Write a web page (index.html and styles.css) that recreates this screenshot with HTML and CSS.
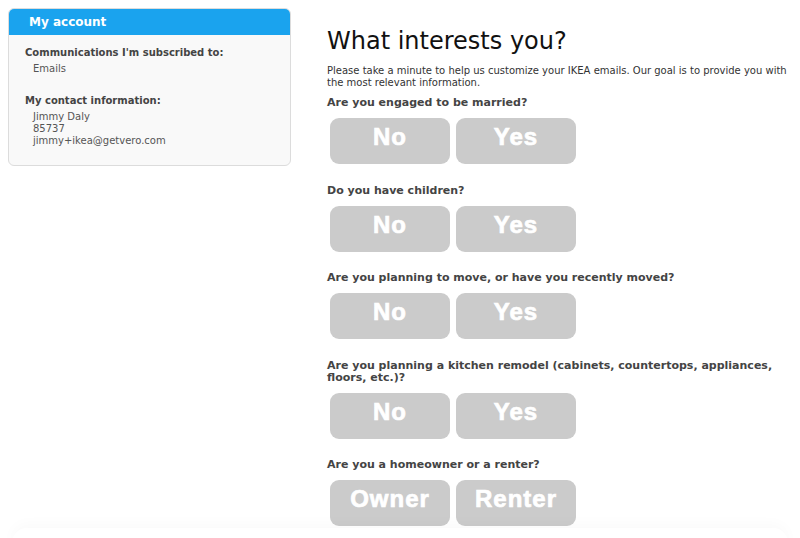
FILE: index.html
```html
<!DOCTYPE html>
<html lang="en">
<head>
    <meta charset="UTF-8">
    <title>My account</title>
    <link rel="stylesheet" href="styles.css">
</head>
<body>
    <div class="page">
        <div class="account-box">
            <div class="account-head">My account</div>
            <div class="account-body">
                <p class="label">Communications I'm subscribed to:</p>
                <p class="value">Emails</p>
                <p class="label spaced">My contact information:</p>
                <p class="value">Jimmy Daly<br>85737<br>jimmy+ikea@getvero.com</p>
            </div>
        </div>

        <div class="main">
            <h1>What interests you?</h1>
            <p class="intro">Please take a minute to help us customize your IKEA emails. Our goal is to provide you with the most relevant information.</p>

            <div class="question">
                <p>Are you engaged to be married?</p>
                <div class="choices">
                    <button class="choice">No</button>
                    <button class="choice">Yes</button>
                </div>
            </div>

            <div class="question">
                <p>Do you have children?</p>
                <div class="choices">
                    <button class="choice">No</button>
                    <button class="choice">Yes</button>
                </div>
            </div>

            <div class="question">
                <p>Are you planning to move, or have you recently moved?</p>
                <div class="choices">
                    <button class="choice">No</button>
                    <button class="choice">Yes</button>
                </div>
            </div>

            <div class="question">
                <p>Are you planning a kitchen remodel (cabinets, countertops, appliances, floors, etc.)?</p>
                <div class="choices">
                    <button class="choice">No</button>
                    <button class="choice">Yes</button>
                </div>
            </div>

            <div class="question">
                <p>Are you a homeowner or a renter?</p>
                <div class="choices">
                    <button class="choice">Owner</button>
                    <button class="choice">Renter</button>
                </div>
            </div>
        </div>
    </div>
    <div class="footer-shade"></div>
</body>
</html>
```

FILE: styles.css
```css
* {
    margin: 0;
    padding: 0;
    box-sizing: border-box;
}

body {
    font-family: 'DejaVu Sans', Verdana, sans-serif;
    background: #fff;
    color: #333;
    overflow: hidden;
}

.page {
    display: flex;
    align-items: flex-start;
    padding: 8px 0 0 8px;
}

/* Sidebar */
.account-box {
    width: 283px;
    flex: 0 0 auto;
    border: 1px solid #dcdcdc;
    border-radius: 6px;
    background: #f9f9f9;
    overflow: hidden;
}

.account-head {
    background: #1aa3ee;
    color: #fff;
    font-weight: bold;
    font-size: 12px;
    height: 26px;
    line-height: 27px;
    padding-left: 20px;
}

.account-body {
    padding: 12px 16px 18px;
}

.account-body p {
    font-size: 10px;
    line-height: 12px;
}

.label {
    font-weight: bold;
    color: #444;
    margin-bottom: 4px;
}

.label.spaced {
    margin-top: 20px;
}

.value {
    color: #555;
    padding-left: 8px;
}

/* Main column */
.main {
    margin-left: 36px;
    width: 462px;
    padding-top: 18px;
}

h1 {
    font-size: 24px;
    font-weight: normal;
    color: #111;
    line-height: 30px;
    margin-bottom: 9px;
}

.intro {
    font-size: 10px;
    line-height: 12px;
    color: #333;
    margin-bottom: 8px;
}

.question {
    margin-bottom: 20.5px;
}

.question p {
    font-size: 11px;
    font-weight: bold;
    line-height: 12px;
    color: #444;
    margin-bottom: 9px;
}

.choices {
    display: flex;
    gap: 6px;
    padding-left: 3px;
}

.choice {
    width: 120px;
    height: 46px;
    padding-bottom: 8px;
    border: none;
    border-radius: 9px;
    background: #cbcbcb;
    color: #fff;
    font-family: 'Liberation Sans', Arial, sans-serif;
    font-weight: bold;
    font-size: 24px;
    letter-spacing: 1px;
    -webkit-text-stroke: 0.7px #fff;
}

.footer-shade {
    position: fixed;
    left: 12px;
    right: 12px;
    bottom: -20px;
    height: 30px;
    border-radius: 30px;
    box-shadow: 0 -4px 14px rgba(0,0,0,0.025);
}
```
